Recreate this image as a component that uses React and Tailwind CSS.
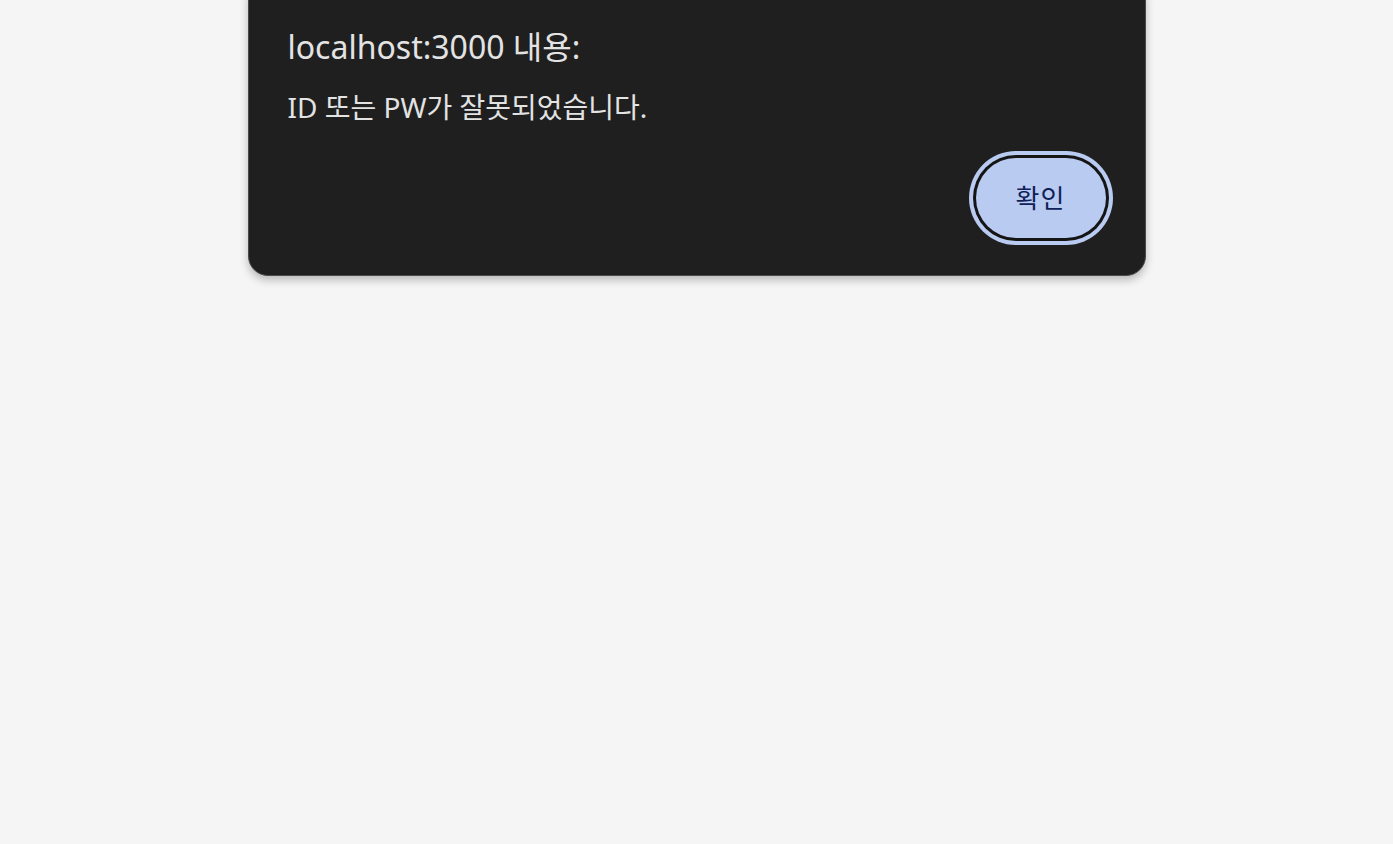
export default function App() {
  return (
    <div
      className="min-h-screen w-full bg-[#f5f5f5] flex justify-center"
      style={{ fontFamily: '"Noto Sans", "Noto Sans CJK KR", sans-serif' }}
    >
      <div className="-mt-[20px] w-[898px] h-[296px] self-start rounded-[20px] bg-[#1f1f1f] border border-[#4a4a4a] shadow-[0_4px_8px_rgba(0,0,0,0.25)] pt-[46px] pl-[39px] pr-[39px] pb-[37px] flex flex-col">
        <div className="text-[32px] leading-[40px] text-[#e3e3e3]">localhost:3000 내용:</div>
        <div className="mt-[23px] text-[28px] leading-[34px] text-[#e3e3e3]">ID 또는 PW가 잘못되었습니다.</div>
        <div className="mt-auto flex justify-end">
          <button className="w-[130px] h-[80px] rounded-full bg-[#bacbf2] text-[#0f2257] text-[26px] leading-none ring-[4px] ring-[#bacbf2] ring-offset-[3px] ring-offset-[#151515] tracking-[1px]">
            확인
          </button>
        </div>
      </div>
    </div>
  );
}
